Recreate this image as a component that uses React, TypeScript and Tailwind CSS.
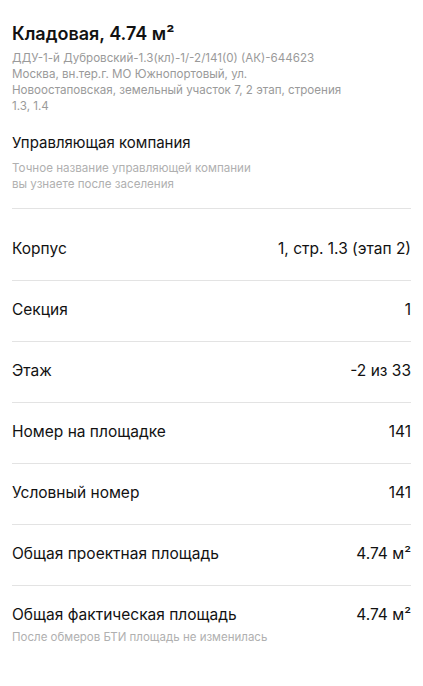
const rows = [
  { label: 'Корпус', value: '1, стр. 1.3 (этап 2)' },
  { label: 'Секция', value: '1' },
  { label: 'Этаж', value: '-2 из 33' },
  { label: 'Номер на площадке', value: '141' },
  { label: 'Условный номер', value: '141' },
  { label: 'Общая проектная площадь', value: '4.74 м²' },
  {
    label: 'Общая фактическая площадь',
    value: '4.74 м²',
    note: 'После обмеров БТИ площадь не изменилась',
  },
];

const App = () => {
  return (
    <div
      className="w-[423px] min-h-[686px] bg-white px-3 text-[#121212]"
      style={{ fontFamily: 'Inter, "Noto Sans", sans-serif' }}
    >
      {/* Header */}
      <div className="border-b border-[#e3e3e3] pb-4">
        <h1 className="pt-[22px] text-[18px] font-semibold leading-6">
          Кладовая, 4.74 м²
        </h1>
        <p className="mt-1 max-w-[340px] text-[11.6px] leading-4 text-[#9a9a9a]">
          ДДУ-1-й Дубровский-1.3(кл)-1/-2/141(0) (АК)-644623
          <br />
          Москва, вн.тер.г. МО Южнопортовый, ул.
          <br />
          Новоостаповская, земельный участок 7, 2 этап, строения
          <br />
          1.3, 1.4
        </p>
        <h2 className="mt-[19px] text-[15px] leading-5">Управляющая компания</h2>
        <p className="mt-[7px] text-[11.6px] leading-4 text-[#b0b0b0]">
          Точное название управляющей компании
          <br />
          вы узнаете после заселения
        </p>
      </div>

      {/* Details */}
      <div className="pt-[11px]">
        {rows.map((row, i) => (
          <div
            key={row.label}
            className={
              i < rows.length - 1
                ? 'border-b border-[#e3e3e3] pt-[19px] pb-[21px]'
                : 'pt-[19px] pb-4'
            }
          >
            <div className="flex items-center justify-between text-[15.5px] leading-5">
              <span>{row.label}</span>
              <span>{row.value}</span>
            </div>
            {row.note && (
              <p className="mt-[4px] text-[11.5px] leading-4 text-[#b0b0b0]">{row.note}</p>
            )}
          </div>
        ))}
      </div>
    </div>
  );
};

export default App;
